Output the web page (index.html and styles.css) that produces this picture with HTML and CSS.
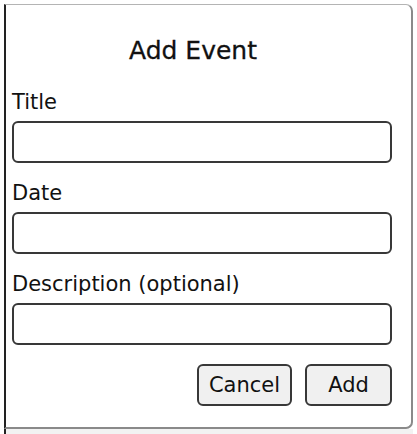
FILE: index.html
```html
<!DOCTYPE html>
<html>
  <head>
    <meta name="viewport" content="width=device-width, initial-scale=1" />
    <title>Add Event</title>
    <link rel="stylesheet" href="styles.css">
  </head>

  <body>
    <div class="dialog">
      <h1 class="dialog-title">Add Event</h1>

      <form class="event-form">
        <label class="field-label">Title</label>
        <input type="text" class="field-input" name="eventTitle" />

        <label class="field-label">Date</label>
        <input type="text" class="field-input" name="eventDate" />

        <label class="field-label">Description (optional)</label>
        <input type="text" class="field-input" name="eventDescription" />

        <div class="actions">
          <button type="button" class="btn btn-cancel">Cancel</button>
          <button type="button" class="btn btn-add">Add</button>
        </div>
      </form>
    </div>
    <div class="under-strip"></div>
  </body>
</html>
```

FILE: styles.css
```css
body {
  margin: 0;
  padding: 4px 0 0 4px;
  font-family: "DejaVu Sans", Verdana, sans-serif;
  background-color: #ffffff;
  color: #111111;
}

.dialog {
  box-sizing: border-box;
  width: 409px;
  height: 425px;
  background-color: #ffffff;
  border-top: 1px solid #b4b4b4;
  border-left: 2px solid #222222;
  border-right: 2px solid #8a8a8a;
  border-bottom: 2px solid #8a8a8a;
  border-radius: 0 7px 7px 0;
  padding: 0 19px 0 6px;
}

.under-strip {
  height: 5px;
  width: 409px;
  box-sizing: border-box;
  border-left: 2px solid #222222;
  background-color: #f2f2f2;
}

.dialog-title {
  margin: 30px 0 0 0;
  text-align: center;
  font-size: 25px;
  font-weight: 500;
  line-height: 32px;
  padding-right: 18px;
  -webkit-text-stroke: 0.3px #111111;
}

.event-form {
  display: flex;
  flex-direction: column;
}

.field-label {
  font-size: 21px;
  line-height: 24px;
  margin-top: 18px;
  margin-bottom: 7px;
}

.field-label:first-child {
  margin-top: 23px;
}

.field-input {
  box-sizing: border-box;
  width: 380px;
  height: 42px;
  margin: 0;
  border: 2px solid #383838;
  border-radius: 6px;
  background-color: #ffffff;
}

.actions {
  display: flex;
  justify-content: flex-end;
  gap: 13px;
  width: 380px;
  margin-top: 19px;
}

.btn {
  box-sizing: border-box;
  height: 42px;
  background-color: #f0f0f0;
  border: 2px solid #383838;
  border-radius: 6px;
  font-family: "DejaVu Sans", Verdana, sans-serif;
  font-size: 21px;
  color: #111111;
  padding: 0;
}

.btn-cancel {
  width: 95px;
}

.btn-add {
  width: 87px;
}
```
